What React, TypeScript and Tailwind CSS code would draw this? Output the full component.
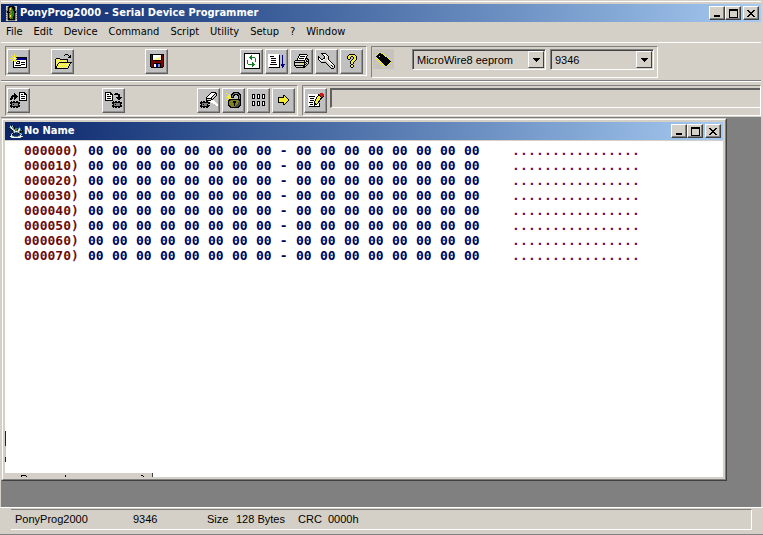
import type { ReactNode } from 'react';

const COLORS: Record<string, string> = {
  K: '#000000',
  W: '#ffffff',
  Y: '#f4ec30',
  P: '#f8f4a0',
  N: '#00008b',
  B: '#7088d0',
  G: '#808080',
  D: '#4a4a4a',
  R: '#800000',
  E: '#c81818',
  F: '#128020',
  O: '#808020',
  T: '#3c7078',
  C: '#a8d8d8',
  S: '#d4d0c8',
};

const ICONS = {
  fresh: [
    '....Y............',
    '.Y..Y..Y.........',
    '..Y.Y.Y..........',
    '...YYYKKKKKKKKKKK',
    'YYYYWYYNNNNNNNNNK',
    '...YYYNNNNNNNNNNK',
    '..Y.Y.YWWWWWWWWWK',
    '.Y.KY.WKKKWWWWWWK',
    '...KWWKWWKWKKKKWK',
    '...KWWKKKKWWWWWWK',
    '...KWWWWWWWKKKKWK',
    '...KWKKKKKKWWWWWK',
    '...KWWWWWWWWWWWWK',
    '...KKKKKKKKKKKKKK',
  ],
  open: [
    '...........KKK....',
    '..........K...K.K.',
    '...............KK.',
    '..............KKK.',
    '..KKKK............',
    '.KPYPYKKKKKKKK....',
    '.KYPYPYPYPYPYK....',
    '.KPYPYPYPYPYPK....',
    '.KYPYKKKKKKKKKKKKK',
    '.KPYKPYPYPYPYPYPK.',
    '.KYKPYPYPYPYPYPK..',
    '.KYKYPYPYPYPYPYK..',
    '.KKPYPYPYPYPYPK...',
    '.KKYPYPYPYPYPYK...',
    '.KKKKKKKKKKKKK....',
  ],
  save: [
    'KKKKKKKKKKKKKK',
    'KRKWWWWWWWWKRK',
    'KRKWWWWWWWPKRK',
    'KRKWWWWWPPPKRK',
    'KRKWWWPPPPPKRK',
    'KRKPPPPPPPPKRK',
    'KRRKKKKKKKKRRK',
    'KRRRRRRRRRRRRK',
    'KRRRRRRRRRRRRK',
    'KRRKKKKKKKKRRK',
    'KRRKWWNNBBKRRK',
    'KRRKWWNNBBKRRK',
    'KRRKWWNNBBKRRK',
    '.KKKKKKKKKKKK.',
  ],
  reload: [
    'KKKKKKKKKKKKKKKK',
    'KWWWWWWWWWWWWWWK',
    'KWWWWWWFWWWWWWWK',
    'KWWWWWFFWWWWWWWK',
    'KWWWWFFFFFFWWWWK',
    'KWWWWWFFWWWFWWWK',
    'KWWWWWWFWWWFWWWK',
    'KWWFWWWWWWWFWWWK',
    'KWWFWWWWWWWFWWWK',
    'KWWFWWWWFWWWWWWK',
    'KWWFWWWWFFWWWWWK',
    'KWWWFFFFFFFWWWWK',
    'KWWWWWWWFFWWWWWK',
    'KWWWWWWWFWWWWWWK',
    'KWWWWWWWWWWWWWWK',
    'KKKKKKKKKKKKKKKK',
  ],
  goto: [
    'WWWWWWWWWWW......',
    'WWWWWWWWWWWK..N..',
    'WWKKKKWWWWWK..N..',
    'WWWWWWWWWWWK..N..',
    'WWWKKKKKWWWK..N..',
    'WWWWWWWWWWWK..N..',
    'WWWKKKKKWWWK..N..',
    'WWWWWWWWWWWK..N..',
    'WWWKKKKKWWWK..N..',
    'WWWWWWWWWWWK..N..',
    'WWKKKKKKKWWK.NNNN',
    'WWWWWWWWWWWK.NNN.',
    'WWWWWWWWWWWK..NN.',
    '.KKKKKKKKKKK..N..',
  ],
  print: [
    '.....KKKKKKKK...',
    '.....KWWWWWWWK..',
    '....KWKKKKKWK...',
    '....KWWWWWWWK...',
    '...KWKKKKKWKKK..',
    '...KWWWWWWWKSKK.',
    '.KKKKKKKKKKSKSK.',
    'KSSSSSSSSSKSKKK.',
    'KKKKKKKKKKKKSSK.',
    'KSSSSSSYYSKSKSK.',
    'KSSSSSSSSSKKSK..',
    'KKKKKKKKKKKSK...',
    '.KSSSSSSSKKK....',
    '..KKKKKKKKK.....',
  ],
  wrench: [
    '...KKKKK.........',
    '....KWWWK........',
    '.....KWWWK.......',
    'K.....KWSWK......',
    'KK....KWSSK......',
    'KWK..KKWSSK......',
    'KWWKKWWSSWK......',
    '.KWWWSSSSWWK.....',
    '..KSSSSSSSWWK....',
    '...KKKKKSSSWWK...',
    '........KSSSWWK..',
    '.........KSSSWWK.',
    '..........KSSKSWK',
    '...........KSWKSK',
    '............KSSSK',
    '.............KKK.',
  ],
  help: [
    '..KKKKKK..',
    '.KYYYYYYK.',
    'KYYYKKYYYK',
    'KYYK..KYYK',
    'KYYK..KYYK',
    '.KK..KYYYK',
    '....KYYYK.',
    '...KYYYK..',
    '...KYYK...',
    '...KYYK...',
    '....KK....',
    '...KYYK...',
    '...KYYK...',
    '....KK....',
  ],
  readChip: [
    '.........KKKKKK...',
    '....K....KWWWWKK..',
    '....KK...KWKKWKKK.',
    '..KKKKK..KWWWWWWK.',
    '.KKKKKKK.KWKKKKWK.',
    '.KK.KKK..KWWWWWWK.',
    'KKK.KK...KWKKKKWK.',
    'KK..K....KWWWWWWK.',
    '.........KKKKKKKK.',
    '.K.KK.KK..........',
    'KKKKKKKKKK........',
    'KKGGGGGGKK........',
    '.KGKGGGGK.........',
    'KKGGGGGGKK........',
    'KKKKKKKKKK........',
    '.K.KK.KK..........',
  ],
  writeChip: [
    'KKKKKK............',
    'KWWWWKK...KKK.....',
    'KWKKWKKK.KKKKKK...',
    'KWWWWWWK.....KK...',
    'KWKKKKWK.....KK...',
    'KWWWWWWK...KKKKKK.',
    'KWKKKKWK....KKKK..',
    'KWWWWWWK.....KK...',
    'KKKKKKKK..........',
    '........K.KK.KK...',
    '.......KKKKKKKKKK.',
    '.......KKGGGGGGKK.',
    '........KGKGGGGK..',
    '.......KKGGGGGGKK.',
    '.......KKKKKKKKKK.',
    '........K.KK.KK...',
  ],
  erase: [
    '...........KKKKK..',
    '..........KWWWWKK.',
    '.........KWWWWKSK.',
    '........KWWWWKSSK.',
    '.......KWWWWKSSK..',
    '......KWWWWKSSK...',
    '......KKKKKKSK....',
    '......KSSSSKK.....',
    '......KKKKKWWW....',
    '.K.KK.KK.WWWWWW...',
    'KKKKKKKKKK.WWWWW..',
    'KKGGGGGGKK...WWWW.',
    '.KGKGGGK.......WWW',
    'KKGGGGGKKK......WW',
    'KKKKKKKKK.........',
    '.K.KK.KK..........',
  ],
  lock: [
    '.......KKKKKK..',
    'Y.....KKGGGGKK.',
    '.Y.Y.KKGKKKKGKK',
    '..YY.KGKK..KKGK',
    '.YYYYKGK....KGK',
    'YYYYYKKK....KGK',
    '..YYYY......KGK',
    '.Y.KKKKKKKKKKKK',
    'Y.KKDOOOOOOODKK',
    '..KOOOOKKKOOODK',
    '..KOOOOKKKOODDK',
    '..KOOOOOKOOODDK',
    '..KOOOOOKOODDDK',
    '..KKOOOOKODDDKK',
    '...KKOOOODDDKK.',
    '....KKKKKKKKK..',
  ],
  bits: [
    'KKK..KKK..KKK',
    'KWK..KWK..KWK',
    'KWK..KWK..KWK',
    'KWK..KWK..KWK',
    'KKK..KKK..KKK',
    '.............',
    '.............',
    'KKK..KKK..KKK',
    'KWK..KWK..KWK',
    'KWK..KWK..KWK',
    'KWK..KWK..KWK',
    'KKK..KKK..KKK',
  ],
  run: [
    '.....KK....',
    '.....KYK...',
    'KKKKKKYYK..',
    'KYYYYYYYYK.',
    'KYYYYYYYYYK',
    'KYYYYYYYYYK',
    'KYYYYYYYYK.',
    'KKKKKKYYK..',
    '.....KYK...',
    '.....KK....',
  ],
  edit: [
    '............EEE.',
    'WWWWWWWWWWKEEEEE',
    'WWWWWWWWWWKKEEEE',
    'WKKKKKKWWKYYKEEK',
    'WWWWWWWWKYYYYKK.',
    'WWKKKKWWKYYYKK..',
    'WWWWWWWKYYYYK...',
    'WWKKKKWKYYYK....',
    'WWWWWWKYYYKK....',
    'WKKKKWKYYYK.....',
    'WWWWWWKKYKWK....',
    'WWKKKWKKKWWK....',
    'WWWWWWKWWWWK....',
    '.KKKKKKKKKKK....',
  ],
  chip: [
    '....Y.............',
    '...YKK.Y..........',
    '..YKKKKKY.........',
    'Y.KKKKKKKY........',
    '.KKKSKKKKKY.......',
    '..KKKKKKKKKKY.....',
    'Y.YKKKKKKKKKKY....',
    '.Y.YKKKKKKKKKKY...',
    '..Y.YKKKKKKKKKK...',
    '...Y.YKKKKKKKKKK..',
    '....Y.YKKKKKKKKY..',
    '.....Y.YKKKKKKY...',
    '......Y.YKKKKY....',
    '.......Y.YKKY.....',
    '........Y.Y.......',
  ],
  app: [
    'SSGKKKKKGSS',
    'SGKKOOKKKGS',
    'SGKOYOKKKGS',
    'SGKOYOFKKGS',
    'GGKOOFFKKGG',
    'GKKOOOFFKKG',
    'GKKKOOFFKKG',
    'SGKOOOFFKGS',
    'GGKOOOFFKGG',
    'SGKOYOFFKGS',
    'GGKOYOFKKGG',
    'SGKOOOFKKGS',
    'GGKKOFFKKGG',
    'SGKKKKKKKGS',
    'SSGGGGGGGSS',
  ],
  pony: [
    '.TKT..........',
    '.WTCK.........',
    'TCWTTK....T...',
    'KTWCOKTTTTCT..',
    '.K.WCTOOKCWTK.',
    '...KCWTOTWCTTK',
    '....TCCWCCTK.K',
    '...KTCTTTCTK..',
    '..TCK.K..KTCT.',
    '..CK.......TC.',
    '..WT......TW..',
    '.WWCCTTTTCCWWS',
    '..SWWWWWWWWS..',
  ],
  minimize: ['......', '......', '......', '......', '......', 'KKKKKK', 'KKKKKK'],
  maximize: [
    'KKKKKKKKK',
    'KKKKKKKKK',
    'K.......K',
    'K.......K',
    'K.......K',
    'K.......K',
    'K.......K',
    'K.......K',
    'KKKKKKKKK',
  ],
  close: [
    'KK....KK',
    '.KK..KK.',
    '..KKKK..',
    '...KK...',
    '..KKKK..',
    '.KK..KK.',
    'KK....KK',
  ],
  drop: ['KKKKKKK', '.KKKKK.', '..KKK..', '...K...'],
};

type IconName = keyof typeof ICONS;

function Icon({ name }: { name: IconName }) {
  const rows = ICONS[name];
  const width = rows[0].length;
  return (
    <svg width={width} height={rows.length} viewBox={`0 0 ${width} ${rows.length}`} shapeRendering="crispEdges" className="shrink-0" aria-hidden="true">
      {rows.map((row, y) =>
        row.split('').map((c, x) => (c === '.' ? null : <rect key={`${x}-${y}`} x={x} y={y} width="1" height="1" fill={COLORS[c]} />))
      )}
    </svg>
  );
}

function ToolButton({ icon, label }: { icon: IconName; label: string }) {
  return (
    <button
      aria-label={label}
      className="flex h-[25px] w-[23px] shrink-0 items-center justify-center border border-t-white border-l-white border-r-[#606060] border-b-[#606060] bg-[#c0c0c0] shadow-[inset_-1px_-1px_0_#909090]"
    >
      <Icon name={icon} />
    </button>
  );
}

function Panel({ className = '', children }: { className?: string; children: ReactNode }) {
  return (
    <div className={`flex border border-t-[#808080] border-l-[#808080] border-r-white border-b-white ${className}`}>
      {children}
    </div>
  );
}

function WindowButton({ icon, label }: { icon: IconName; label: string }) {
  return (
    <button
      aria-label={label}
      className="flex h-[14px] w-4 items-center justify-center border border-t-white border-l-white border-r-[#404040] border-b-[#404040] bg-[#d4d0c8] shadow-[inset_-1px_-1px_0_#808080]"
    >
      <Icon name={icon} />
    </button>
  );
}

function TitleBar({ icon, title }: { icon: IconName; title: string }) {
  return (
    <div className="flex h-[18px] items-center bg-linear-to-r from-[#0a246a] to-[#a6caf0] pr-0.5 pl-0.5">
      <div className="flex w-[17px] shrink-0 justify-center">
        <Icon name={icon} />
      </div>
      <h1 className="flex-1 truncate font-['DejaVu_Sans_Condensed','DejaVu_Sans',sans-serif] text-[11px] leading-[18px] font-bold text-white">
        {title}
      </h1>
      <WindowButton icon="minimize" label="Minimize" />
      <WindowButton icon="maximize" label="Maximize" />
      <div className="ml-0.5">
        <WindowButton icon="close" label="Close" />
      </div>
    </div>
  );
}

function DropDown({ label, value, className }: { label: string; value: string; className: string }) {
  return (
    <div className={`relative h-[21px] border border-t-[#808080] border-l-[#808080] border-r-white border-b-white ${className}`}>
      <select
        aria-label={label}
        defaultValue={value}
        className="block h-full w-full appearance-none border-t border-l border-[#404040] bg-[#d4d0c8] pl-[3px] text-[11px]"
      >
        <option>{value}</option>
      </select>
      <span className="pointer-events-none absolute top-px right-px flex h-[17px] w-4 items-center justify-center border border-t-white border-l-white border-r-[#404040] border-b-[#404040] bg-[#d4d0c8]">
        <Icon name="drop" />
      </span>
    </div>
  );
}

const MENUS = ['File', 'Edit', 'Device', 'Command', 'Script', 'Utility', 'Setup', '?', 'Window'];

const ADDRESSES = ['000000', '000010', '000020', '000030', '000040', '000050', '000060', '000070'];
const BYTES = Array.from({ length: 16 }, () => '00');

function HexDump() {
  return (
    <table className="table-fixed border-collapse font-['DejaVu_Sans_Mono','Liberation_Mono',monospace] text-[13px] leading-[15px] font-bold">
      <tbody>
        {ADDRESSES.map((address) => (
          <tr key={address} className="h-[15px] text-[#00005c]">
            <th className="p-0 text-left text-[#6e0a0a]">
              <div className="w-16">{address})</div>
            </th>
            {BYTES.map((byte, i) => (
              <td key={i} className="p-0">
                <div className={i === 7 ? 'flex w-10' : 'w-6'}>
                  {byte}
                  {i === 7 && <span className="ml-2">-</span>}
                </div>
              </td>
            ))}
            <td className="p-0 pl-6 text-[#6a0a6a]">
              <div className="flex">
                {BYTES.map((_, i) => (
                  <span key={i} className="w-2">.</span>
                ))}
              </div>
            </td>
          </tr>
        ))}
      </tbody>
    </table>
  );
}

function DocumentWindow() {
  return (
    <section className="mr-[34px] mb-[26px] flex flex-1 flex-col border border-t-[#d4d0c8] border-l-[#d4d0c8] border-r-[#404040] border-b-[#404040] bg-[#d4d0c8]">
      <div className="flex flex-1 flex-col border border-t-white border-l-white border-r-[#808080] border-b-[#808080] p-0.5">
        <TitleBar icon="pony" title="No Name" />
        <div className="relative mt-px flex-1 bg-white pt-0.5 pl-[19px]">
          <HexDump />
          {/* leftovers of an unpainted area */}
          <svg width="148" height="46" className="absolute bottom-0 left-0" shapeRendering="crispEdges" aria-hidden="true">
            <path fill="#0a246a" d="M0 0h1v15h-1zM0 26h1v5h-1z" />
            <path fill="#a6caf0" d="M0 15h1v11h-1z" />
            <path fill="#d4d0c8" d="M0 42h148v4H0z" />
            <path fill="#404040" d="M147 42h1v4h-1z" />
            <path fill="#000" d="M16 44h5v1h-5zM16 45h1v1h-1zM21 45h1v1h-1zM60 44h1v2h-1zM136 44h2v1h-2zM138 45h1v1h-1z" />
          </svg>
        </div>
      </div>
    </section>
  );
}

export default function App() {
  return (
    <div className="flex min-h-screen flex-col bg-[#d4d0c8] pt-px font-['Liberation_Sans',Arial,sans-serif] text-[11px] text-black">
      <div className="mr-0.5 ml-px flex flex-1 flex-col">
        <header className="border-t border-white pt-0.5">
          <TitleBar icon="app" title="PonyProg2000 - Serial Device Programmer" />
          <nav className="flex h-5 items-center gap-[11px] pl-[5px] font-['DejaVu_Sans_Condensed','DejaVu_Sans',sans-serif] text-[11px]">
            {MENUS.map((menu) => (
              <button key={menu}>{menu}</button>
            ))}
          </nav>
        </header>

        <div className="flex items-start gap-1 border-t border-white pt-[3px] pb-0.5 pl-1">
          <Panel className="h-[30px] items-center gap-0.5 pr-[3px] pl-px">
            <ToolButton icon="fresh" label="New" />
            <div className="ml-[19px]"><ToolButton icon="open" label="Open" /></div>
            <div className="ml-[69px]"><ToolButton icon="save" label="Save" /></div>
            <div className="ml-[70px]"><ToolButton icon="reload" label="Reload" /></div>
            <ToolButton icon="goto" label="Go to" />
            <ToolButton icon="print" label="Print" />
            <ToolButton icon="wrench" label="Options" />
            <ToolButton icon="help" label="Help" />
          </Panel>
          <Panel className="h-8 items-start gap-1 pt-0.5 pr-[3px] pl-px">
            <div className="mr-[14px] flex h-5 w-[21px] items-center justify-center bg-[#c8c4bc]">
              <Icon name="chip" />
            </div>
            <DropDown label="Device family" value="MicroWire8 eeprom" className="w-[134px]" />
            <DropDown label="Device type" value="9346" className="w-[104px]" />
          </Panel>
        </div>

        <div className="flex gap-1 border-t border-[#808080] pb-px pl-1 shadow-[inset_0_1px_0_#fff]">
          <Panel className="mt-1 h-[31px] items-center gap-0.5 pr-0.5 pb-px pl-px">
            <ToolButton icon="readChip" label="Read device" />
            <div className="ml-[70px]"><ToolButton icon="writeChip" label="Write device" /></div>
            <div className="ml-[70px]"><ToolButton icon="erase" label="Erase" /></div>
            <ToolButton icon="lock" label="Security bits" />
            <ToolButton icon="bits" label="Serial number" />
            <ToolButton icon="run" label="Program" />
          </Panel>
          <Panel className="mt-1 h-[31px] flex-1 items-center pb-px pl-px">
            <ToolButton icon="edit" label="Edit note" />
            <input
              aria-label="Note"
              className="ml-[3px] mb-1 h-5 min-w-0 flex-1 border-t-2 border-l-2 border-b border-t-[#606060] border-l-[#606060] border-b-white bg-[#d4d0c8] px-1"
            />
          </Panel>
        </div>

        <main className="flex flex-1 flex-col border-t border-[#808080] bg-[#808080]">
          <DocumentWindow />
        </main>
      </div>

      <footer className="border-t border-b border-t-white border-b-[#808080] pt-px pr-[11px] pb-1 pl-[11px]">
        <div className="flex h-[21px] items-center border-t border-r border-b border-t-[#808080] border-r-white border-b-white pl-1">
          <span className="w-[118px]">PonyProg2000</span>
          <span className="w-[74px]">9346</span>
          <span className="w-[29px]">Size</span>
          <span className="w-[62px]">128 Bytes</span>
          <span>CRC&nbsp; 0000h</span>
        </div>
      </footer>
    </div>
  );
}
